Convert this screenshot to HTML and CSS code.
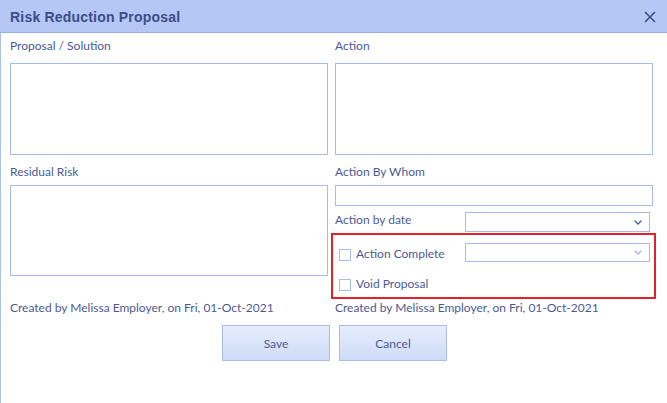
FILE: index.html
```html
<!DOCTYPE html>
<html>
<head>
<meta charset="utf-8">
<link rel="stylesheet" href="styles.css">
</head>
<body>
<div class="dialog">
  <div class="titlebar">
    <span class="title">Risk Reduction Proposal</span>
    <svg class="close" width="12" height="12" viewBox="0 0 12 12"><path d="M1 1 L11 11 M11 1 L1 11" stroke="#3d4d8a" stroke-width="1.6" fill="none"/></svg>
  </div>
  <div class="content">
    <div class="grid">
      <div class="col">
        <div class="label first">Proposal / Solution</div>
        <div class="area tall"></div>
        <div class="label second">Residual Risk</div>
        <div class="area residual"></div>
      </div>
      <div class="col">
        <div class="label first">Action</div>
        <div class="area tall"></div>
        <div class="label second">Action By Whom</div>
        <div class="input"></div>
        <div class="daterow">
          <div class="label">Action by date</div>
          <div class="select"><svg width="8" height="5" viewBox="0 0 8 5"><path d="M0.5 0.5 L4 4 L7.5 0.5" stroke="#4d5d99" stroke-width="1.3" fill="none"/></svg></div>
        </div>
        <div class="redbox">
          <div class="checkrow one">
            <div class="check"></div>
            <div class="label cl">Action Complete</div>
            <div class="select disabled"><svg width="8" height="5" viewBox="0 0 8 5"><path d="M0.5 0.5 L4 4 L7.5 0.5" stroke="#a9b7e0" stroke-width="1.3" fill="none"/></svg></div>
          </div>
          <div class="checkrow two">
            <div class="check"></div>
            <div class="label cl">Void Proposal</div>
          </div>
        </div>
      </div>
      <div class="label created">Created by Melissa Employer, on Fri, 01-Oct-2021</div>
      <div class="label created">Created by Melissa Employer, on Fri, 01-Oct-2021</div>
    </div>
    <div class="buttons">
      <div class="btn">Save</div>
      <div class="btn">Cancel</div>
    </div>
  </div>
</div>
</body>
</html>
```
FILE: styles.css
```css
html, body {
  margin: 0;
  padding: 0;
  background: #ffffff;
}
.dialog {
  width: 667px;
  height: 403px;
  overflow: hidden;
  font-family: Lato, "Liberation Sans", sans-serif;
  font-size: 12px;
  color: #4b5a94;
}
.titlebar {
  height: 32px;
  background: #b4c7f5;
  border-bottom: 1px solid #9bb1ea;
  display: flex;
  align-items: center;
  justify-content: space-between;
  padding: 0 10px 0 10px;
}
.title {
  font-family: "Liberation Sans", Arial, sans-serif;
  font-weight: bold;
  font-size: 14px;
  letter-spacing: 0.2px;
  color: #3d4d8a;
  margin-top: 1px;
}
.close {
  margin-right: 1px;
  margin-top: 1px;
}
.content {
  height: 370px;
  border-left: 1px solid #a9bff0;
  padding: 0 14px 0 9px;
}
.grid {
  display: grid;
  grid-template-columns: 318px 318px;
  column-gap: 7px;
}
.col {
  display: flex;
  flex-direction: column;
}
.label {
  line-height: 16px;
  white-space: nowrap;
}
.label.first {
  margin-top: 5px;
  margin-bottom: 9px;
}
.label.second {
  margin-top: 9px;
  margin-bottom: 5px;
}
.area {
  border: 1px solid #a7bcee;
  background: #fff;
  box-sizing: border-box;
}
.area.tall {
  height: 92px;
}
.area.residual {
  height: 91px;
}
.input {
  height: 21px;
  border: 1px solid #a7bcee;
  box-sizing: border-box;
}
.daterow {
  display: flex;
  align-items: flex-start;
  justify-content: space-between;
  margin-top: 6px;
  padding-right: 3px;
}
.select {
  width: 185px;
  height: 20px;
  box-sizing: border-box;
  border: 1px solid #a7bcee;
  display: flex;
  align-items: center;
  justify-content: flex-end;
  padding-right: 7px;
}
.select.disabled {
  height: 19px;
  margin-left: auto;
}
.redbox {
  margin: 1px -3px 0 -4px;
  border: 2px solid #e5202b;
  height: 66px;
  box-sizing: border-box;
  padding: 8px 4px 0 6px;
}
.checkrow {
  display: flex;
  align-items: flex-start;
}
.checkrow.two {
  margin-top: 14px;
}
.check {
  width: 12px;
  height: 12px;
  box-sizing: border-box;
  border: 1px solid #a7bcee;
  background: #fff;
  margin-right: 5px;
}
.one .check {
  margin-top: 6px;
}
.two .check {
  margin-top: 3px;
}
.one .cl {
  margin-top: 3px;
}
.created {
  margin-top: 1px;
}
.buttons {
  display: flex;
  justify-content: center;
  gap: 9px;
  margin-top: 9px;
  padding-left: 6px;
}
.btn {
  width: 108px;
  height: 36px;
  box-sizing: border-box;
  border: 1px solid #a9bdeb;
  background: linear-gradient(#e6edfc, #cfdbf8);
  display: flex;
  align-items: center;
  justify-content: center;
  color: #4b5a94;
}
```
